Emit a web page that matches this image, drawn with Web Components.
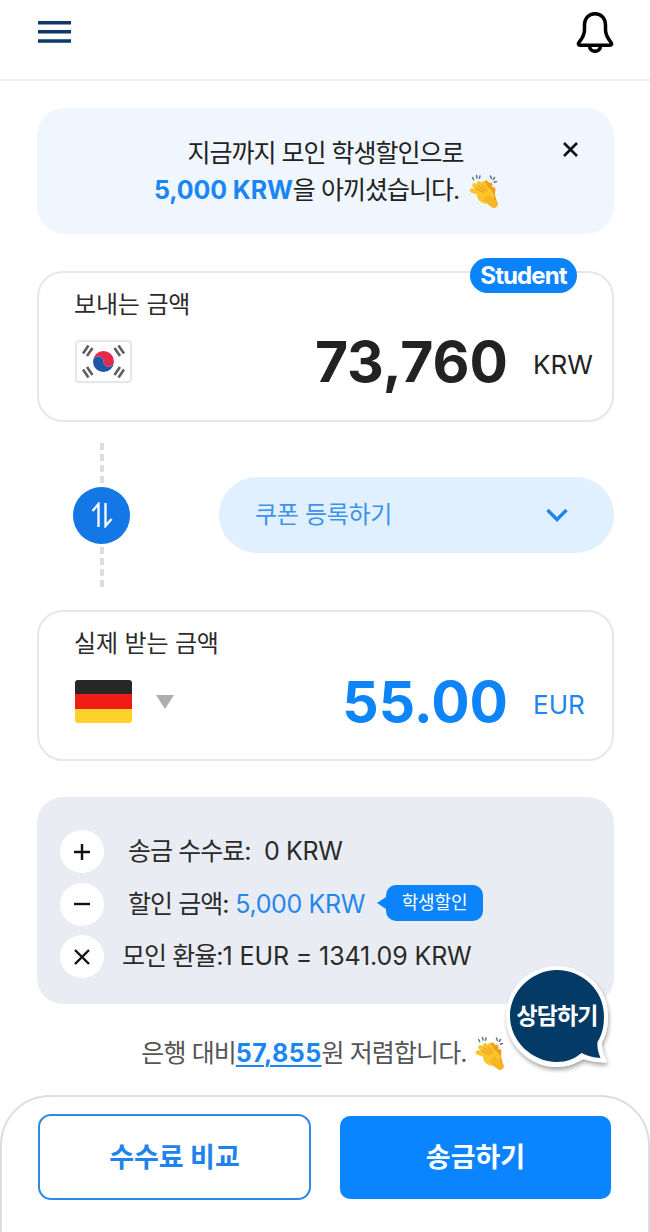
<!DOCTYPE html>
<html lang="ko"><head><meta charset="utf-8"><title>송금</title>
<style>
html,body{margin:0;padding:0;background:#fff}
body{width:650px;height:1232px;overflow:hidden;font-family:Inter,"Noto Sans CJK KR",sans-serif;color:#222}
</style></head><body>
<remit-app></remit-app>
<script>
const FONT='Inter,"Noto Sans CJK KR",sans-serif';
function def(name,html){
  customElements.define(name,class extends HTMLElement{
    constructor(){super();this.attachShadow({mode:'open'}).innerHTML=typeof html==='function'?'':html;}
    connectedCallback(){ if(typeof html==='function') this.shadowRoot.innerHTML=html(this); }
  });
}
def('clap-emoji',`<style>:host{display:inline-block;width:36px;height:36px;vertical-align:middle}svg{display:block}</style>
<svg width="36" height="36" viewBox="0 0 36 36" fill="none" stroke-linecap="round">
<path d="M6.500 4.500l1.200 2.200M10.500 2.500l.5 2.500M14 3l-.6 2.300M24.500 3l.8 2.300M28.500 4.500l-1.300 2M30.500 8.500l-2.200.8" stroke="#69737f" stroke-width="1.500"/>
<path d="M18 17L20 10M22.500 19L24 12M26 23l1-6.500" stroke="#eea019" stroke-width="5"/>
<path d="M20 14L29 22 31 29 24 33 15 24z" fill="#eea019"/>
<path d="M19 21.500L6 17.500M19 20L8.500 12.500M20.500 19L13 10.500M21.500 19L17.500 10.500" stroke="#fdc42b" stroke-width="4.600"/>
<ellipse cx="19.500" cy="22.500" rx="9" ry="8" transform="rotate(35 19.500 22.500)" fill="#fdc42b"/>
<path d="M22 26l6 5" stroke="#f7b423" stroke-width="7.500"/>
<path d="M9.500 15.500l8 4M12 12.800l7 5.700M16 12l5 6" stroke="#e39513" stroke-width="1"/>
</svg>`);
def('kr-flag',`<style>:host{display:block;width:57px;height:43px;margin-left:1px}div{box-sizing:border-box;width:57px;height:43px;background:#fff;border:2px solid #e3e8f0;border-radius:4px;display:flex;align-items:center;justify-content:center}svg{display:block}</style>
<div><svg width="53" height="39" viewBox="0 0 53 39">
<g transform="translate(26.500 19.500)">
<path d="M-10.500 0A10.500 10.500 0 0 1 10.500 0 5.250 5.250 0 0 1 0 0 5.250 5.250 0 0 0 -10.500 0Z" fill="#e5294d"/>
<path d="M-10.500 0A5.250 5.250 0 0 1 0 0 5.250 5.250 0 0 0 10.500 0 10.500 10.500 0 0 1 -10.500 0Z" fill="#1f57a8"/>
<g stroke="#5f5f5f" stroke-width="2.600">
<path d="M-20.500-8l5.500-8M-16.500-5.500l5.500-8"/>
<path d="M20.500-8l-5.500-8M16.500-5.500l-5.500-8"/>
<path d="M-20.500 8l5.500 8M-16.500 5.500l5.500 8"/>
<path d="M20.500 8l-5.500 8M16.500 5.500l-5.500 8"/>
</g></g></svg></div>`);
def('de-flag',`<style>:host{display:block;width:57px;height:43px;margin-left:1px;border-radius:3px;overflow:hidden}i{display:block;height:14.330px}</style>
<i style="background:#272727"></i><i style="background:#ef1c17"></i><i style="background:#ffd22b"></i>`);
def('app-header',`<style>:host{display:flex;box-sizing:border-box;height:81px;border-bottom:2px solid #f0f0f0;padding:0 36px 0 38px;justify-content:space-between}
svg{display:block}.m{margin-top:21px}.b{margin-top:12px}</style>
<svg class="m" width="33" height="22" viewBox="0 0 33 22"><path d="M0 1.700h33M0 10.800h33M0 20h33" stroke="#0f3a68" stroke-width="3.600"/></svg>
<svg class="b" width="38" height="41" viewBox="0 0 38 41" fill="none" stroke="#000" stroke-width="3.500" stroke-linejoin="round"><path d="M19 1.800c-6.800 0-10.500 5-10.500 11v5c0 6-2.500 9-5.500 12.500-1.300 1.500-.6 3 1.200 3h29.600c1.800 0 2.500-1.500 1.200-3-3-3.500-5.500-6.500-5.500-12.500v-5c0-6-3.700-11-10.500-11z"/><path d="M13.500 33.500c0 3.800 2.300 5.800 5.500 5.800s5.500-2 5.500-5.800"/></svg>`);
def('notice-banner',`<style>:host{display:block;position:relative;box-sizing:border-box;height:126px;margin-top:27px;background:#f0f6fe;border-radius:28px;padding-top:27px;text-align:center;font:400 25px/37px ${FONT};color:#222;letter-spacing:-1px}
b{color:#1a86f2;font-weight:700;letter-spacing:-.1px}.x{position:absolute;left:526px;top:34px;display:block}clap-emoji{margin:-8px 0 -6px 1px}
</style>
<div>지금까지 모인 학생할인으로</div><div style="padding-left:5px"><b>5,000 KRW</b>을 아끼셨습니다. <clap-emoji></clap-emoji></div>
<svg class="x" width="15" height="15" viewBox="0 0 15 15"><path d="M1 1l13 13M14 1L1 14" stroke="#111" stroke-width="2.600"/></svg>`);
def('amount-card',h=>`<style>:host{display:block;position:relative;box-sizing:border-box;height:151px;background:#fff;border:2px solid #e5e7eb;border-radius:26px;padding:14px 20px 0 35px}
.l{font:400 24px/35px ${FONT};color:#2b2b2b;height:35px;letter-spacing:-.15px}
.r{display:flex;align-items:center;margin-top:${h.getAttribute('gap')||19}px;height:43px}
.amt{margin-left:auto;font:700 57px/43px Inter,sans-serif;color:${h.getAttribute('color')||'#222'}}
.cur{font:400 26px/43px Inter,sans-serif;width:59px;margin-left:25px;margin-top:6px;color:${h.getAttribute('curcolor')||'#222'}}
</style>
<div class="l"><slot name="label"></slot></div>
<div class="r"><slot name="flag"></slot><span class="amt"><slot name="amount"></slot></span><span class="cur"><slot name="cur"></slot></span></div><slot></slot>`);
def('student-badge',`<style>:host{position:absolute;left:431px;top:-15px;display:block;width:107px;height:35px;box-sizing:border-box;background:#0b84fb;border-radius:18px;color:#fff;font:700 24px/35px Inter,sans-serif;text-align:center;letter-spacing:-.9px}</style>Student`);
def('swap-row',`<style>:host{display:flex;align-items:center;height:188px;box-sizing:border-box;padding-left:73px}
.c{display:flex;flex-direction:column;align-items:center;width:57px;flex:none}
.d{width:4px;height:41px;background:repeating-linear-gradient(#dedede 0 7px,transparent 7px 11px)}
.o{width:57px;height:57px;border-radius:50%;background:#1377e6;margin:3px 0;display:flex;align-items:center;justify-content:center}
.p{margin-left:89px;width:395px;height:76px;margin-top:-3px;border-radius:38px;background:#e1f0ff;display:flex;align-items:center;padding:0 46px 0 36px;box-sizing:border-box;color:#3d92ea;font:400 24px/1 ${FONT};letter-spacing:-.3px;justify-content:space-between}
svg{display:block}</style>
<div class="c"><div class="d"></div><div class="o"><svg width="24" height="26" viewBox="0 0 24 26" fill="none" stroke="#fff" stroke-width="2.300"><path d="M8.500 25V2L2.500 9"/><path d="M15.500 1v23l6-7"/></svg></div><div class="d" style="height:43px"></div></div>
<div class="p"><span>쿠폰 등록하기</span><svg width="22" height="14" viewBox="0 0 22 14" fill="none" stroke="#1a86f2" stroke-width="3.400"><path d="M1.500 2l9.500 9.500L20.500 2"/></svg></div>`);
def('fee-row',h=>`<style>:host{display:flex;align-items:center;height:43px;margin-bottom:9.500px;font:400 25px/43px ${FONT};color:#2a2a2a;white-space:pre;letter-spacing:-.35px}
.i{width:44px;height:43px;border-radius:50%;background:#fff;flex:none;display:flex;align-items:center;justify-content:center;margin-right:${h.getAttribute('gap')||24}px}svg{display:block}</style>
<div class="i"><svg width="18" height="18" viewBox="0 0 18 18" stroke="#111" stroke-width="2.400" fill="none"><path d="${h.getAttribute('d')}"/></svg></div><slot></slot>`);
def('tag-bubble',`<style>:host{display:inline-block;position:relative;margin:-2px 0 0 21px;width:97px;height:36px;box-sizing:border-box;background:#0b84fb;border-radius:10px;color:#fff;font:400 18px/35px ${FONT};letter-spacing:-.1px;text-align:center}
i{position:absolute;left:-9px;top:12px;border:6px solid transparent;border-right:9px solid #0b84fb;border-left:0}</style><i></i>학생할인`);
def('fee-panel',`<style>:host{display:block;box-sizing:border-box;height:207px;margin-top:36px;background:#e9edf3;border-radius:26px;padding:33px 0 0 23px}</style><slot></slot>`);
def('savings-line',`<style>:host{display:block;height:40px;margin-top:29px;text-align:center;font:400 25px/40px ${FONT};color:#555;padding-right:2px;white-space:nowrap;letter-spacing:-.9px}
a{color:#1a86f2;font-weight:700;text-decoration:underline;text-underline-offset:3px;text-decoration-thickness:2px;letter-spacing:.4px}clap-emoji{margin:-8px 0 -4px -1px}</style>
은행 대비<a>57,855</a>원 저렴합니다. <clap-emoji></clap-emoji>`);
def('chat-bubble',`<style>:host{position:absolute;left:502px;top:961px;display:block;width:112px;height:112px}svg{display:block;position:absolute;inset:0}
span{position:absolute;left:0;width:110px;top:39px;text-align:center;color:#fff;font:700 23px/32px ${FONT};letter-spacing:-.9px}</style>
<svg width="112" height="112" viewBox="0 0 112 112"><defs><filter id="f" x="-20%" y="-20%" width="140%" height="140%"><feDropShadow dx="1" dy="3" stdDeviation="2" flood-color="#000" flood-opacity=".35"/></filter></defs>
<path d="M55 5c28 0 51 22 51 50 0 11-2 19-6 26-.8 5 1 12 5 20-9 1-16-1-24-3-8 5-17 8-26 8C27 106 4 83 4 55S27 5 55 5z" fill="#fff" filter="url(#f)"/>
<path d="M55 9c25 0 47 20 47 46 0 11-2 19-6.500 26-.5 5 .5 10 3 16-7-.5-13-2-19-5-7 6-15 9-24.500 9C30 101 8 80 8 55S30 9 55 9z" fill="#033a66"/></svg><span>상담하기</span>`);
def('action-sheet',`<style>:host{position:absolute;left:0;right:0;top:1095px;height:180px;box-sizing:border-box;background:#fff;border:2px solid #d9dee6;border-radius:50px 50px 0 0;padding:17px 37px 0 36px;display:flex;justify-content:space-between;align-items:flex-start}</style><slot></slot>`);
def('sheet-button',h=>{const o=h.hasAttribute('outline');return `<style>:host{display:flex;align-items:center;justify-content:center;box-sizing:border-box;width:${o?273:271}px;height:${o?86:83}px;margin-top:${o?0:2}px;border-radius:${o?13:10}px;${o?'border:2px solid #2e86e8;color:#1f83ee;background:#fff':'background:#0a84ff;color:#fff'};font:700 27px/1 ${FONT}}</style><slot></slot>`});
def('remit-app',`<style>:host{display:block;width:650px;height:1232px;position:relative;overflow:hidden;background:#fff}
main{display:block;padding:0 36px 0 37px}
.blue{color:#2387ee}.ko{letter-spacing:-.95px}.wide{letter-spacing:-.12px}</style>
<app-header></app-header>
<main>
<notice-banner></notice-banner>
<amount-card gap="18" style="margin-top:37px"><span slot="label">보내는 금액</span><kr-flag slot="flag"></kr-flag><span slot="amount">73,760</span><span slot="cur">KRW</span><student-badge></student-badge></amount-card>
</main>
<swap-row></swap-row>
<main>
<amount-card color="#0d84f7" curcolor="#1f86ee"><span slot="label">실제 받는 금액</span><span slot="flag" style="display:flex;align-items:center"><de-flag></de-flag><svg style="margin-left:24px;display:block" width="18" height="14" viewBox="0 0 18 14"><path d="M0 0h18L9 14z" fill="#aeaeae"/></svg></span><span slot="amount">55.00</span><span slot="cur">EUR</span></amount-card>
<fee-panel>
<fee-row d="M9 1v16M1 9h16"><span><span class="ko">송금 수수료:</span>  0 KRW</span></fee-row>
<fee-row d="M1 9h16"><span><span class="ko">할인 금액:</span> <span class="blue">5,000 KRW</span></span><tag-bubble></tag-bubble></fee-row>
<fee-row gap="18" d="M2 2l14 14M16 2L2 16"><span class="wide"><span class="ko">모인 환율:</span>1 EUR = 1341.09 KRW</span></fee-row>
</fee-panel>
<savings-line></savings-line>
</main>
<action-sheet><sheet-button outline>수수료 비교</sheet-button><sheet-button>송금하기</sheet-button></action-sheet>
<chat-bubble></chat-bubble>`);
</script></body></html>
